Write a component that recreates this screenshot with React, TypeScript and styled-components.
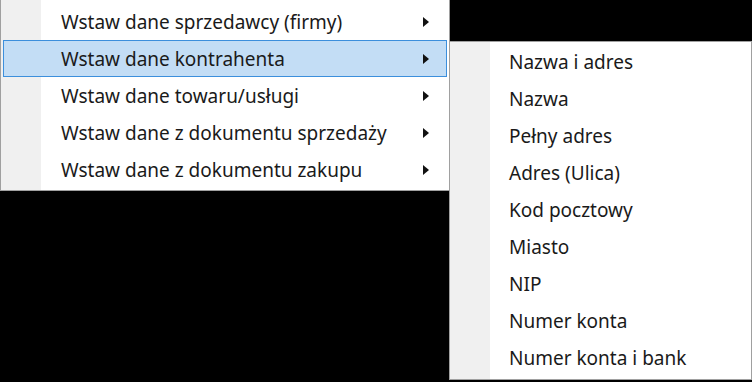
import React from "react";
import styled, { createGlobalStyle } from "styled-components";

const GlobalStyle = createGlobalStyle`
  *, *::before, *::after { box-sizing: border-box; }
  html, body {
    margin: 0;
    padding: 0;
    background: #000;
    overflow: hidden;
  }
`;

const Stage = styled.div`
  display: flex;
  align-items: flex-start;
  width: 752px;
  height: 382px;
  font-family: "Noto Sans", "Open Sans", sans-serif;
`;

const Menu = styled.div<{ $sub?: boolean }>`
  display: flex;
  flex-direction: column;
  width: ${(p) => (p.$sub ? "303px" : "450px")};
  margin-top: ${(p) => (p.$sub ? "41px" : "-1px")};
  margin-left: ${(p) => (p.$sub ? "-1px" : "0")};
  padding: ${(p) => (p.$sub ? "1px 2px 3px 0" : "3px 2px 2px 0")};
  border: 1px solid #a0a0a0;
  background: linear-gradient(to right, #f0f0f0 40px, #fff 40px);
`;

const Item = styled.div<{ $active?: boolean; $indent: number }>`
  display: flex;
  align-items: center;
  height: 37px;
  padding-left: ${(p) => p.$indent}px;
  padding-right: 17px;
  margin-left: 2px;
  border: 1px solid ${(p) => (p.$active ? "#3c8fdc" : "transparent")};
  background: ${(p) => (p.$active ? "#c3ddf5" : "transparent")};
  color: #1a1a1a;
  font-size: 19px;
  white-space: nowrap;
`;

const Label = styled.span`
  flex: 1;
`;

const Arrow = styled.span`
  width: 0;
  height: 0;
  border-top: 5px solid transparent;
  border-bottom: 5px solid transparent;
  border-left: 6px solid #111;
`;

const mainItems = [
  "Wstaw dane sprzedawcy (firmy)",
  "Wstaw dane kontrahenta",
  "Wstaw dane towaru/usługi",
  "Wstaw dane z dokumentu sprzedaży",
  "Wstaw dane z dokumentu zakupu",
];

const subItems = [
  "Nazwa i adres",
  "Nazwa",
  "Pełny adres",
  "Adres (Ulica)",
  "Kod pocztowy",
  "Miasto",
  "NIP",
  "Numer konta",
  "Numer konta i bank",
];

const App = () => {
  return (
    <>
      <GlobalStyle />
      <Stage>
        <Menu>
          {mainItems.map((t, i) => (
            <Item key={t} $active={i === 1} $indent={57}>
              <Label>{t}</Label>
              <Arrow />
            </Item>
          ))}
        </Menu>
        <Menu $sub>
          {subItems.map((t) => (
            <Item key={t} $indent={56}>
              <Label>{t}</Label>
            </Item>
          ))}
        </Menu>
      </Stage>
    </>
  );
};

export default App;
